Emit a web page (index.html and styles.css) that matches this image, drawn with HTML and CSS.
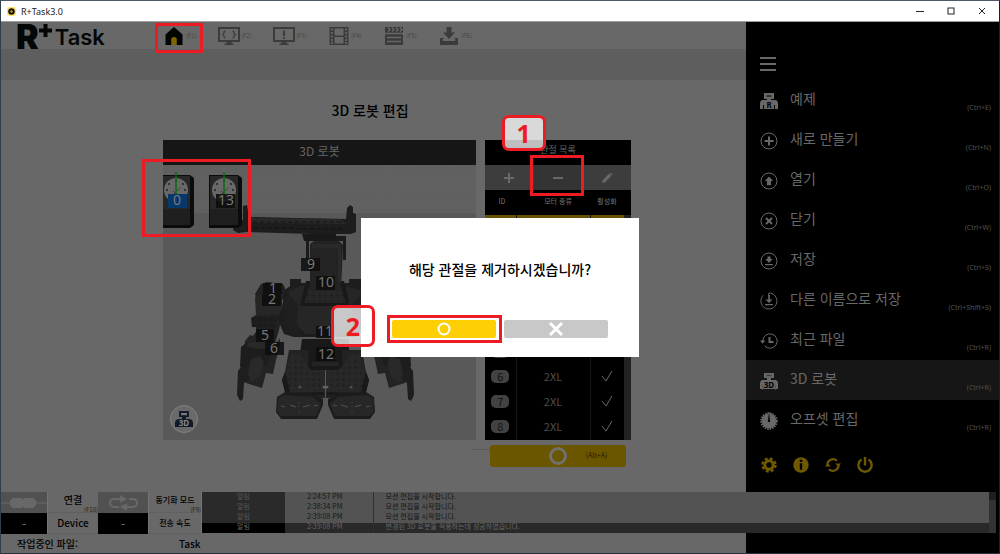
FILE: index.html
```
<!DOCTYPE html>
<html lang="ko">
<head>
<meta charset="utf-8">
<meta name="viewport" content="width=device-width, initial-scale=1">
<title>R+Task3.0</title>
<link rel="stylesheet" href="styles.css">
</head>
<body>
<div class="window">
  <header class="titlebar">
    <svg class="app-icon" viewBox="0 0 10 10" aria-hidden="true"><rect width="10" height="10" rx="3" fill="#ffe36a"/><circle cx="5" cy="5" r="3.6" fill="#15120a"/><circle cx="5" cy="5" r="1.3" fill="#d9a514"/></svg>
    <span class="app-name">R+Task3.0</span>
    <div class="window-controls">
      <button type="button" aria-label="Minimize"><svg viewBox="0 0 8 8"><path d="M0 4.5h8"/></svg></button>
      <button type="button" aria-label="Maximize"><svg viewBox="0 0 8 8"><rect x="1" y="1" width="6" height="6"/></svg></button>
      <button type="button" aria-label="Close"><svg viewBox="0 0 8 8"><path d="M1 1l6 6M7 1l-6 6"/></svg></button>
    </div>
  </header>

  <div class="app">
    <main class="stage">
      <div class="toolbar">
        <div class="logo">
          <span class="logo-r">R</span>
          <svg class="logo-plus" viewBox="0 0 13 13" aria-hidden="true"><path d="M6.5 0v13M0 6.5h13"/></svg>
          <span class="logo-task">Task</span>
        </div>
        <nav class="modes">
          <button type="button" class="mode mode-home" aria-label="Home">
            <svg viewBox="0 0 22 18"><path fill="#000502" d="M11 0l8.500 7.500V18h-17V7.500z"/><path fill="#7d6500" d="M8.200 18v-5.500q0-2.500 2.800-2.500t2.800 2.500V18z"/></svg><span>(F1)</span>
            <i class="mark mark-home"></i>
          </button>
          <button type="button" class="mode" aria-label="Task">
            <svg viewBox="0 0 22 18"><path fill="none" stroke="#3b3b3b" stroke-width="2" d="M1 1h20v13H1z"/><path fill="#3b3b3b" d="M8.500 15h5v1.500h2V18h-9v-1.500h2z"/><path fill="none" stroke="#3b3b3b" stroke-width="1.300" d="M7.500 4Q6 4 6 5.500T4.800 7.500Q6 8 6 9.500T7.500 11.200M14.500 4Q16 4 16 5.500t1.200 2Q16 8 16 9.500t-1.500 1.700"/></svg><span>(F2)</span>
          </button>
          <button type="button" class="mode" aria-label="Output">
            <svg viewBox="0 0 22 18"><path fill="none" stroke="#3b3b3b" stroke-width="2" d="M1 1h20v13H1z"/><path fill="#3b3b3b" d="M8.500 15h5v1.500h2V18h-9v-1.500h2zM10 3.500h2v5.500h-2zM10 10h2v1.800h-2z"/></svg><span>(F3)</span>
          </button>
          <button type="button" class="mode" aria-label="Motion">
            <svg viewBox="0 0 22 18"><path fill="#3b3b3b" fill-rule="evenodd" d="M1.500 0h19v18h-19zM6.500 1.500v7h9v-7zM6.500 10v6.500h9V10zM3 1.500v2h1.800v-2zM3 5v2h1.800V5zM3 8.500v2h1.800v-2zM3 12v2h1.800v-2zM3 15v2h1.800v-2zM17.200 1.500v2H19v-2zM17.200 5v2H19V5zM17.200 8.500v2H19v-2zM17.200 12v2H19v-2zM17.200 15v2H19v-2z"/></svg><span>(F4)</span>
          </button>
          <button type="button" class="mode" aria-label="Scene">
            <svg viewBox="0 0 22 18"><path fill="#3b3b3b" d="M2 0h18v18H2z"/><path fill="none" stroke="#686868" stroke-width="1.300" d="M5 .5l2 2-2 2M9 .5l2 2-2 2M13 .5l2 2-2 2M17 .5l2 2-2 2"/><path stroke="#686868" stroke-width="1.400" d="M2 6.500h18M4 10.500h14M4 14.500h14"/></svg><span>(F5)</span>
          </button>
          <button type="button" class="mode" aria-label="Download">
            <svg viewBox="0 0 22 18"><path fill="#3b3b3b" d="M8.500 0h5v5.500H17L11 12 5 5.500h3.500zM2 11h3.500v1H4.800v2h12.400v-2h-.7v-1H20v7H2z"/></svg><span>(F6)</span>
          </button>
        </nav>
      </div>
      <div class="band"></div>

      <section class="workspace">
        <h1>3D 로봇 편집</h1>
        <div class="panels">
          <section class="viewer">
            <h2>3D 로봇</h2>
            <div class="scene">
              <svg viewBox="163 165 313 274" preserveAspectRatio="xMinYMin slice" role="img" aria-label="3D 로봇">
                <defs>
                  <pattern id="holes" width="6" height="6" patternUnits="userSpaceOnUse"><circle cx="1.500" cy="1.500" r=".7" fill="#141414"/><circle cx="4.500" cy="4.500" r=".6" fill="#2c2c2c"/></pattern>
                  <g id="arm">
                    <path fill="#212121" d="M255 294l6-10 6-2 16 2 4 8-1 6-4 2-1 20-2 10-9 30-9-3-9 3-4-4 1-15 7-9v-11l4-7-2-10z"/>
                    <path fill="#1d1d1d" d="M251 318l5-3 20 1v12l-24-1z"/><path fill="url(#holes)" d="M251 315h25v13h-25z"/>
                    <path fill="#262626" d="M255 297l10-5 17 2-1 21-25 1z"/>
                    <path fill="#232323" d="M245 341l5-6 26 9 4-6-1 12-3 10-3 14-7-1-4 15-16-5-2-3z"/>
                    <path fill="#1d1d1d" d="M246 343l-5 4-1 20 5 1 3-6h4l14 4 5-11v-9z"/>
                    <path fill="#292929" d="M248 343l17-2 10 5-12 3-16-2zM251 359l9-3 4 6-4 14-8 6-4-5z"/>
                    <path fill="#1e1e1e" d="M244 363l6 1-3 10 3 4-6 5-1 16-3 2-3-6 1-24z"/>
                  </g>
                  <g id="leg">
                    <path fill="#222" d="M325 350h-36l-4 22-3 8 3 12 4 6h36z"/>
                    <path fill="#272727" d="M291 353l11 2 7 13 16 2v23l-35 1-4-20z"/>
                    <path fill="url(#holes)" d="M290 355l10 1 8 14 17 4v17h-37z"/>
                    <path fill="#191919" d="M285 372l-3 8 3 12 5 1-3-13zM287 393l37-1v3l-34 1z"/>
                    <path fill="#1c1c1c" d="M285 392l-8 5-1 15 5 7h36l6-14v-6l-10-5z"/>
                    <path fill="#272727" d="M284 395l-6 3-1 13 4 5h35l5-12-8-7z"/>
                    <path stroke="#5c5c5c" stroke-width=".8" fill="none" d="M281 406l4 1M290 405l6 2M303 407l7-2M314 406l4-1M299 402v1M299 406v1M299 411v1"/>
                    <circle cx="300" cy="387" r="1.600" fill="#4c4c4c"/>
                  </g>
                  <g id="servo">
                    <path fill="#0b0b0b" d="M209 175h29l4 3v47l-4 3h-29z"/><path fill="#272727" d="M210 176h28v49h-28z"/>
                    <path fill="#1f1f1f" d="M210 209h28v16h-28z"/><circle cx="224" cy="190" r="12" fill="#686868"/>
                    <g fill="#202020"><circle cx="224" cy="181" r="1"/><circle cx="217" cy="184" r="1"/><circle cx="231" cy="184" r="1"/><circle cx="215" cy="190" r="1"/><circle cx="233" cy="190" r="1"/><circle cx="217" cy="196" r="1"/><circle cx="231" cy="196" r="1"/></g>
                    <path stroke="#202020" stroke-width="1" stroke-dasharray="1 1" d="M222 194l7-7M221 191l5 6"/>
                    <path stroke="#0c6d12" stroke-width="1.600" d="M224 172v22"/>
                  </g>
                </defs>
                <path fill="#606060" d="M163 165h313v48H163z"/><path fill="#595959" d="M163 213h313v226H163z"/>
                <path fill="none" stroke="#656565" stroke-width=".6" d="M163 189h313M163 203h313M163 177h313M180 165l50 48M200 165l42 48M220 165l34 48M240 165l26 48M260 165l20 48M280 165l14 48M300 165l9 48M322 165v48M345 165l-6 48M368 165l-12 48M390 165l-17 48M412 165l-24 48M434 165l-30 48M456 165l-38 48"/>
                <use href="#arm"/><use href="#arm" transform="matrix(-1 0 0 1 651 0)"/>
                <path fill="#1d1d1d" d="M282 307l3-17 5-4v-7h11v4h48v-4h12v7l5 4 3 17-3 14-9 16h-63l-10-3-6-14z"/>
                <path fill="#262626" d="M289 291l12-5 48 1 12 4 4 20-10 20-20 4-29-1-17-16z"/>
                <path fill="#1f1f1f" d="M282 307l5-15 11 12-1 29-5 2-7-13zM368 307l-5-15-11 12 1 29 5 2 7-13z"/>
                <path fill="#191919" d="M306 281h38l6 25h-50z"/><path fill="#262626" d="M309 287h32l5 16h-42z"/><path fill="url(#holes)" d="M307 290h38v14h-38z"/>
                <path fill="#191919" d="M302 339h47v14h-49z"/>
                <use href="#leg"/><use href="#leg" transform="matrix(-1 0 0 1 651 0)"/>
                <path fill="#191919" d="M309 347h33v19l-4 4h-27l-3-4z"/><path fill="#242424" d="M312 362h27v4h-27z"/><ellipse cx="325.500" cy="387" rx="3" ry="1.600" fill="#606060"/>
                <path fill="#1b1b1b" d="M306 236h40v24h-3v-19h-34v17h-3z"/><path fill="#232323" d="M310 244l4-3h25l4 4-2 46h-31z"/><path fill="#292929" d="M312 244h29v4h-29z"/><path fill="#2a2a2a" d="M338 248h3v34h-3z"/>
                <path fill="#1d1d1d" d="M233 230l2-8 8-2v-14l4-1 2 12 46 1 51 1 1-11 3-3 3 2v6l3 1v18l-5 2h-39l-66-2-8 1z"/>
                <path fill="#282828" d="M250 218l90 1 7 5-99-1z"/><path stroke="#131313" stroke-width="1.200" stroke-dasharray="4 3" d="M253 222h92M247 228l98 1"/><path fill="#191919" d="M302 234h34v5l-6 2h-26z"/>
                <use href="#servo"/><use href="#servo" x="-48"/>
                <g class="tags">
                  <g fill="#0d0d0d" fill-opacity=".85"><path d="M301 258h19v13h-19zM316 276h19v14h-19zM263 283h19v11h-19zM262 294h19v12h-19zM256 329h18v13h-18zM265 342h19v13h-19zM316 326h19v12h-19zM316 347h19v14h-19zM216 194h19v14h-19z"/></g>
                  <path fill="#06396b" d="M168 194h19v14h-19z"/>
                  <text x="311" y="269">9</text><text x="326" y="287">10</text><text x="273" y="293">1</text><text x="272" y="304">2</text><text x="265" y="340">5</text><text x="274" y="353">6</text><text x="325" y="336">11</text><text x="326" y="359">12</text><text x="177" y="205">0</text><text x="226" y="205">13</text>
                </g>
              </svg>
              <button type="button" class="view-toggle" aria-label="3D">
                <svg viewBox="0 0 18 16"><path fill="#101a2b" d="M4 0h10v6h-3v2h3.500q3.500.5 3.500 4v4H0v-4q0-3.500 3.500-4H7V6H4z"/><path fill="#777" d="M6 2h6v2.200H6z"/><text class="icon-3d" x="9" y="15">3D</text></svg>
              </button>
              <i class="mark mark-servo"></i>
            </div>
          </section>

          <section class="joints">
            <h2>관절 목록</h2>
            <div class="joint-tools">
              <button type="button" aria-label="Add"><svg viewBox="0 0 12 12"><path d="M6 1v10M1 6h10"/></svg></button>
              <button type="button" class="remove" aria-label="Remove"><svg viewBox="0 0 12 12"><path d="M1 6h10"/></svg><i class="mark mark-remove"></i><b class="step step-one">1</b></button>
              <button type="button" aria-label="Edit"><svg viewBox="0 0 12 12"><path fill="#696969" stroke="none" d="M1 11l.8-3L8 1.800 10.200 4 4 10.200zM8.600 1.200l.8-.8 2.200 2.200-.8.8z"/></svg></button>
            </div>
            <div class="joint-list">
              <table>
                <thead><tr><th>ID</th><th>모터 종류</th><th>활성화</th></tr></thead>
                <tbody>
                  <tr class="selected"><td></td><td></td><td></td></tr>
                  <tr><td></td><td></td><td></td></tr>
                  <tr><td></td><td></td><td></td></tr>
                  <tr><td></td><td></td><td></td></tr>
                  <tr><td></td><td></td><td></td></tr>
                  <tr><td><span class="pill"></span></td><td></td><td></td></tr>
                  <tr><td><span class="pill">6</span></td><td>2XL</td><td><svg class="check" viewBox="0 0 12 12"><path d="M1 6l4 5 6-10"/></svg></td></tr>
                  <tr><td><span class="pill">7</span></td><td>2XL</td><td><svg class="check" viewBox="0 0 12 12"><path d="M1 6l4 5 6-10"/></svg></td></tr>
                  <tr><td><span class="pill">8</span></td><td>2XL</td><td><svg class="check" viewBox="0 0 12 12"><path d="M1 6l4 5 6-10"/></svg></td></tr>
                </tbody>
              </table>
              <div class="scroll"></div>
            </div>
          </section>
        </div>
        <div class="actions">
          <span class="rule"></span>
          <button type="button" class="apply" aria-label="Apply"><i></i><svg viewBox="0 0 18 18"><circle cx="9" cy="9" r="7.500"/></svg><span>(Alt+A)</span></button>
        </div>
      </section>
    </main>

    <aside class="sidebar">
      <button type="button" class="burger" aria-label="Menu"><svg viewBox="0 0 18 16"><path d="M1 2h16M1 8h16M1 14h16"/></svg></button>
      <nav class="menu">
        <a href="#"><svg viewBox="0 0 18 18"><path class="solid" d="M4 1h10v6h-3v1h5q2 1 2 3v6h-3v-4h-1v4H4v-4H3v4H0v-6q0-2 2-3h5V7H4z"/><path fill="#000" d="M6 3h6v2H6z"/><text class="icon-letter" x="9" y="16">R</text></svg><span>예제</span><kbd>(Ctrl+E)</kbd></a>
        <a href="#"><svg viewBox="0 0 18 18"><circle cx="9" cy="9" r="8"/><path class="bold" d="M9 4.500v9M4.500 9h9"/></svg><span>새로 만들기</span><kbd>(Ctrl+N)</kbd></a>
        <a href="#"><svg viewBox="0 0 18 18"><circle cx="9" cy="9" r="8"/><path class="solid" d="M9 4.500L13.200 9H11v4.200H7V9H4.800z"/></svg><span>열기</span><kbd>(Ctrl+O)</kbd></a>
        <a href="#"><svg viewBox="0 0 18 18"><circle cx="9" cy="9" r="8"/><path class="bold" d="M6 6l6 6M12 6l-6 6"/></svg><span>닫기</span><kbd>(Ctrl+W)</kbd></a>
        <a href="#"><svg viewBox="0 0 18 18"><circle cx="9" cy="9" r="8"/><path class="solid" d="M7.500 4.500h3V7h2.200L9 11 5.300 7h2.200zM5 12h8v1.300H5z"/></svg><span>저장</span><kbd>(Ctrl+S)</kbd></a>
        <a href="#"><svg viewBox="0 0 18 18"><path d="M8.800 4V1a8 8 0 1 1-5.500 2.300"/><path class="solid" d="M8.200 3h1.600v4.500h2.700L9 11 5.500 7.500h2.700zM5 12h8v1.300H5z"/></svg><span>다른 이름으로 저장</span><kbd>(Ctrl+Shift+S)</kbd></a>
        <a href="#"><svg viewBox="0 0 18 18"><path d="M2.800 9a7.200 7.200 0 1 1 1.800 4.800M5 14l2 2"/><path class="solid" d="M0 8.500h5.200l-2.600 3.300z"/><path class="bold" d="M9.500 5v5h4"/></svg><span>최근 파일</span><kbd>(Ctrl+R)</kbd></a>
        <a href="#" class="current"><svg viewBox="0 0 18 18"><path class="solid" d="M4 1h10v5h-3v2h5q2 1 2 3v6H0v-6q0-2 2-3h5V6H4z"/><path fill="#161616" d="M6 2.800h6v1.500H6zM2 12h1v5H2zM15 12h1v5h-1z"/><text class="icon-letter" x="9" y="16">3D</text></svg><span>3D 로봇</span><kbd>(Ctrl+R)</kbd></a>
        <a href="#"><svg viewBox="0 0 18 18"><circle class="solid" cx="9" cy="9" r="7"/><circle cx="9" cy="9" r="7.800" stroke-width="2" stroke-dasharray="1.500 1"/><path fill="#000" d="M8.300 1h1.400l.8 8.500L9 11 7.500 9.500z"/></svg><span>오프셋 편집</span><kbd>(Ctrl+R)</kbd></a>
      </nav>
      <div class="utilities">
        <button type="button" aria-label="Settings"><svg viewBox="0 0 16 16"><circle cx="8" cy="8" r="4.200" fill="none" stroke="#6f5900" stroke-width="3"/><circle cx="8" cy="8" r="6.400" fill="none" stroke="#6f5900" stroke-width="2.600" stroke-dasharray="2.900 2.126"/></svg></button>
        <button type="button" aria-label="Information"><svg viewBox="0 0 16 16"><circle cx="8" cy="8" r="7.700" fill="#6f5900"/><path fill="#000" d="M6.800 2.800h2.400v2.300H6.800zM6.800 6.300h2.400v6.500H6.800z"/></svg></button>
        <button type="button" aria-label="Refresh"><svg viewBox="0 0 16 16"><path fill="none" stroke="#6f5900" stroke-width="2" d="M2.500 9A5.700 5.700 0 0 1 12 3.800M13.500 7A5.700 5.700 0 0 1 4 12.200"/><path fill="#6f5900" d="M0 9.500h5.600L2.800 6zM10.400 6.500H16L13.200 10z"/></svg></button>
        <button type="button" aria-label="Power"><svg viewBox="0 0 16 16"><path fill="none" stroke="#6f5900" stroke-width="2.400" d="M4.500 2.500a6.600 6.600 0 1 0 7 0M8 0v8.500"/></svg></button>
      </div>
    </aside>

    <section class="status">
      <div class="cells">
        <div class="cell icon"><svg viewBox="0 0 47 16"><path stroke="#686868" d="M0 8h47"/><path fill="#686868" d="M12 3h9l1.500 1.500L24 3h9l3 3v4l-3 3h-9l-1.500-1.500L21 13h-9l-3-3V6z"/></svg></div>
        <div class="cell label">연결<small>(F10)</small></div>
        <div class="cell icon"><svg viewBox="0 0 50 16"><path fill="none" stroke="#686868" stroke-width="2" d="M21 12h-4q-5 0-5-4t5-4h9M24 4M31 4h3q5 0 5 4t-5 4h-9"/><path fill="#686868" d="M22 0l7 4-7 4zM29 8v8l-7-4z"/></svg></div>
        <div class="cell label narrow">동기화 모드<small>(F9)</small></div>
        <div class="cell value">-</div>
        <div class="cell label">Device</div>
        <div class="cell value">-</div>
        <div class="cell label narrow">전송 속도</div>
      </div>
      <div class="log">
        <table>
          <tbody>
            <tr><td>알림</td><td>2:24:57 PM</td><td>모션 편집을 시작합니다.</td></tr>
            <tr><td>알림</td><td>2:38:34 PM</td><td>모션 편집을 시작합니다.</td></tr>
            <tr><td>알림</td><td>2:39:08 PM</td><td>모션 편집을 시작합니다.</td></tr>
            <tr class="latest"><td>알림</td><td>2:39:08 PM</td><td>변경된 3D 로봇을 적용하는데 성공하였습니다.</td></tr>
          </tbody>
        </table>
        <div class="scroll"></div>
      </div>
    </section>

    <footer class="filebar"><span>작업중인 파일:</span><span>Task</span></footer>

    <div class="overlay">
      <div class="dialog" role="dialog" aria-modal="true" aria-labelledby="question">
        <p id="question">해당 관절을 제거하시겠습니까?</p>
        <div class="choices">
          <button type="button" class="yes" aria-label="OK"><svg viewBox="0 0 18 18"><circle cx="9" cy="9" r="5.500"/></svg><i class="mark mark-yes"></i><b class="step step-two">2</b></button>
          <button type="button" class="no" aria-label="Cancel"><svg viewBox="0 0 18 18"><path d="M3 3l12 12M15 3L3 15"/></svg></button>
        </div>
      </div>
    </div>
  </div>
</div>
</body>
</html>
```
FILE: styles.css
```
* { box-sizing: border-box; }
body {
  margin: 0;
  font-family: "Noto Sans CJK KR", "Noto Sans", sans-serif;
  color: #000;
}
button {
  margin: 0; padding: 0; border: 0;
  background: none; color: inherit; font: inherit;
  position: relative;
}
svg { display: block; }
h1, h2, p { margin: 0; font-weight: 500; }
table { border-collapse: collapse; table-layout: fixed; width: 100%; }
th, td { padding: 0; font-weight: 400; }

.window {
  min-height: 100vh;
  display: grid;
  grid-template-rows: 20px 1fr;
  border: 1px solid #4d586a;
  border-left-color: #303d4c;
  border-right-color: #10232e;
  border-bottom-color: #27323e;
}

.titlebar {
  display: flex; align-items: center; gap: 5px;
  padding: 0 2px 0 6px;
  background: #fff; color: #222;
  font: 9px "Noto Sans", sans-serif;
}
.app-icon { width: 9px; height: 9px; }
.window-controls { margin-left: auto; display: flex; }
.window-controls button { width: 31px; height: 20px; display: grid; place-items: center; }
.window-controls svg { width: 8px; height: 8px; fill: none; stroke: #222; }

.app {
  position: relative;
  display: grid;
  grid-template-columns: minmax(0, 1fr) 253px;
  grid-template-rows: 1fr 42px 19px;
  border-top: 1px solid #a0a0a0;
  background: #686868;
}
.stage { grid-area: 1 / 1; }
.sidebar { grid-area: 1 / 2 / 4 / 3; background: #000; }
.status { grid-area: 2 / 1 / 3 / 3; z-index: 1; display: flex; margin-right: 3px; }
.filebar { grid-area: 3 / 1; }

/* toolbar */
.toolbar { height: 27px; display: flex; align-items: center; padding-left: 15px; }
.logo { display: flex; width: 147px; height: 27px; font-family: Inter, sans-serif; color: #050606; }
.logo-r { font-size: 34px; font-weight: 900; line-height: 30px; }
.logo-plus { width: 13px; height: 13px; margin-top: 2px; fill: none; stroke: #050606; stroke-width: 4px; }
.logo-task { font-size: 22px; font-weight: 600; line-height: 30px; padding-left: 3px; }
.modes { display: flex; }
.mode { width: 55px; display: flex; align-items: center; gap: 1px; font-size: 6px; color: #454545; }
.mode svg { width: 22px; height: 18px; flex: none; }
.band { height: 31px; background: #5e5e5e; }

/* highlight frames and step badges */
.mark { position: absolute; border: 3px solid #ed1c24; z-index: 2; }
.mark-home { inset: -4px 15px -8px -8px; }
.mark-servo { left: -21px; top: -6px; width: 109px; height: 78px; }
.mark-remove { inset: -10px -2px -6px -4px; }
.mark-yes { inset: -5px -6px -5px -5px; }
.step {
  position: absolute; z-index: 3;
  width: 44px; border: 3px solid #ed1c24; border-radius: 7px;
  background: rgba(255, 255, 255, .75);
  color: #ed1c24; text-align: center;
  font: bold 25px/30px "Open Sans", sans-serif;
}
.step-one { left: -32px; top: -50px; line-height: 30px; }
.step-two { left: -61px; top: -15px; line-height: 36px; }

/* workspace */
.workspace { padding: 20px 115px 0 162px; }
.workspace h1 { margin-left: -54px; text-align: center; font-size: 14px; line-height: 20px; }
.panels { display: grid; grid-template-columns: minmax(0, 1fr) 146px; gap: 9px; margin-top: 20px; }
.viewer { display: grid; grid-template-rows: 25px 1fr; }
.viewer h2, .joints h2 { text-align: center; color: #666; font-weight: 400; line-height: 24px; }
.viewer h2 { background: #161616; font-size: 12px; line-height: 22px; }
.joints { background: #000; }
.joints h2 { font-size: 9px; height: 25px; line-height: 20px; }
.scene { position: relative; background: #595959; }
.scene > svg { width: 100%; height: 274px; }
.tags text { font: 14px "Noto Sans", sans-serif; fill: #777; text-anchor: middle; }
.view-toggle {
  position: absolute; left: 7px; bottom: 7px;
  width: 28px; height: 28px; border-radius: 50%;
  background: #6a6a6a; border: 1px solid #808080;
  display: grid; place-items: center;
}
.view-toggle svg { width: 18px; height: 16px; }
.icon-3d { font: bold 8px "Noto Sans", sans-serif; fill: #888; text-anchor: middle; }

.joint-tools { display: grid; grid-template-columns: repeat(3, 1fr); height: 25px; background: #3d3d3d; }
.joint-tools button { display: grid; place-items: center; }
.joint-tools .remove { background: #343434; }
.joint-tools svg { width: 12px; height: 12px; fill: none; stroke: #696969; stroke-width: 2px; }
.joint-list { display: grid; grid-template-columns: 1fr 7px; position: relative; }
.joint-list .scroll { background: #222; margin-top: 25px; }
.joint-list tr { height: 25px; }
.joint-list tr > :nth-child(1) { width: 31px; }
.joint-list tr > :nth-child(3) { width: 34px; }
.joint-list th { font-size: 7px; line-height: 20px; color: #777; padding-bottom: 4px; white-space: nowrap; }
.joint-list th:nth-child(1) { padding-left: 3px; }
.joint-list th:nth-child(2) { padding-left: 10px; }
.joint-list td { height: 25px; padding-bottom: 3px; font-size: 11px; line-height: 18px; text-align: center; vertical-align: middle; color: #4f4f4f; border-left: 1px solid #151515; }
.joint-list td:first-child { border-left: 0; }
.joint-list .selected td { background: #665200; }
.pill { display: block; width: 18px; height: 13px; margin: 0 auto; border-radius: 5px; background: #424242; color: #111; line-height: 12px; }
.check { width: 12px; height: 12px; margin: 0 auto; fill: none; stroke: #686868; }

.actions { display: grid; grid-template-columns: 1fr 136px; padding: 5px 5px 0 0; }
.rule { border-top: 1px solid #5a5a5a; width: 18px; justify-self: end; margin-top: 4px; }
.apply { height: 22px; border-radius: 3px; background: #6b5600; display: grid; grid-template-columns: 1fr 18px 1fr; align-items: center; }
.apply svg { width: 18px; height: 18px; fill: none; stroke: #707070; stroke-width: 3px; }
.apply span { font-size: 7px; line-height: 10px; padding-bottom: 3px; color: #241d00; }

/* sidebar */
.sidebar { color: #686868; }
.burger { display: grid; align-items: center; height: 58px; padding: 26px 13px 0; align-content: start; }
.burger { height: 58px; }
.burger svg { width: 18px; height: 16px; margin-top: 8px; stroke: #686868; stroke-width: 2px; }
.menu a { display: flex; align-items: center; gap: 12px; height: 40px; padding: 0 8px 0 14px; color: inherit; text-decoration: none; }
.menu a.current { background: #161616; }
.menu svg { width: 18px; height: 18px; margin-top: 1px; fill: none; stroke: #686868; stroke-width: 1px; flex: none; }
.menu .solid { fill: #686868; }
.menu path.solid { stroke: none; }
.menu .bold { stroke-width: 2px; }
.icon-letter { font: bold 8px "Noto Sans", sans-serif; fill: #000; stroke: none; text-anchor: middle; }
.menu span { font-size: 14px; line-height: 20px; padding-bottom: 5px; }
.menu kbd { margin-left: auto; margin-top: 16px; font: 7px/10px "Noto Sans", sans-serif; color: #505050; }
.utilities { display: flex; gap: 16px; padding: 17px 15px; }
.utilities svg { width: 16px; height: 16px; }

/* status */
.cells { display: grid; grid-template-columns: 46px 51px 50px 53px; grid-template-rows: 21px 21px; }
.cell { position: relative; display: grid; place-items: center; line-height: 16px; }
.cell.icon { background: #515151; }
.cell.icon svg { width: 100%; height: 16px; }
.cell.label { border-left: 1px solid #747474; border-bottom: 1px solid #606060; font-size: 10px; font-weight: 500; }
.cell.label.narrow { font-size: 8px; }
.cell.label:has(small) { line-height: 12px; padding-bottom: 4px; }
.cell.value { background: #000; color: #777; font-size: 12px; }
.cell small { position: absolute; right: 0; bottom: -1px; font-size: 6px; line-height: 6px; font-weight: 400; color: #222; }
.log { flex: 1; display: grid; grid-template-columns: 1fr 7px; align-items: start; height: 41px; background: #535353; border-left: 1px solid #777; overflow: hidden; }
.log .scroll { height: 41px; background: #333; border-top: 8px solid #1e1e1e; }
.log td { font-size: 7px; line-height: 7px; padding-bottom: 3px; color: #161616; white-space: nowrap; }
.log tr:first-child td { line-height: 8px; }
.log td:nth-child(1) { width: 83px; text-align: center; background: #2a2a2a; color: #565656; }
.log td:nth-child(2) { width: 88px; padding-left: 22px; border-right: 1px solid #303030; }
.log td:nth-child(3) { padding-left: 12px; }
.log .latest td { background: #292929; color: #666; }
.log .latest td:nth-child(1) { background: #000; }

.filebar { display: flex; align-items: center; padding-left: 16px; font-size: 10px; line-height: 15px; font-weight: 500; }
.filebar span:first-child { width: 162px; }

/* confirmation */
.overlay { position: absolute; inset: 0; z-index: 5; display: grid; place-items: center; }
.dialog { width: 278px; background: #fff; padding: 41px 31px 19px; }
.dialog p { font-size: 14px; line-height: 20px; text-align: center; white-space: nowrap; }
.choices { display: grid; grid-template-columns: 1fr 1fr; gap: 8px; margin-top: 41px; }
.choices button { height: 18px; border-radius: 2px; display: grid; place-items: center; background: #c8c8c8; }
.choices .yes { background: #ffcf06; }
.choices svg { width: 18px; height: 18px; fill: none; stroke: #fff; stroke-width: 3px; }
.choices .yes svg { stroke-width: 2px; }
```
